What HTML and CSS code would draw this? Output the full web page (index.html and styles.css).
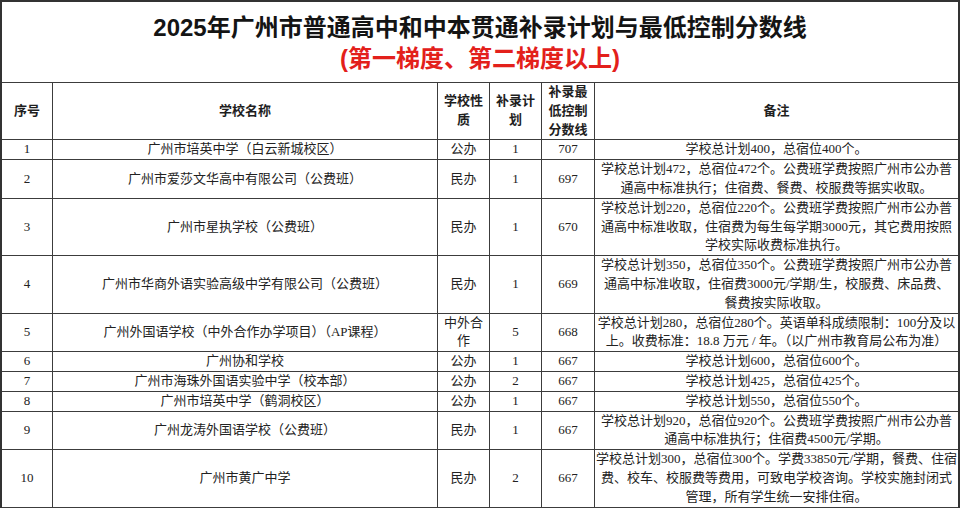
FILE: index.html
```html
<!DOCTYPE html>
<html lang="zh-CN">
<head>
<meta charset="utf-8">
<title>2025年广州市普通高中和中本贯通补录计划与最低控制分数线</title>
<link rel="stylesheet" href="styles.css">
</head>
<body>
<div class="sheet">
  <table class="grid">
    <colgroup>
      <col class="c-no">
      <col class="c-name">
      <col class="c-type">
      <col class="c-plan">
      <col class="c-score">
      <col class="c-note">
    </colgroup>
    <thead>
      <tr>
        <th colspan="6" class="title-cell">
          <div class="title">2025年广州市普通高中和中本贯通补录计划与最低控制分数线</div>
          <div class="subtitle">(第一梯度、第二梯度以上)</div>
        </th>
      </tr>
      <tr class="head">
        <th>序号</th>
        <th>学校名称</th>
        <th>学校性<br>质</th>
        <th>补录计<br>划</th>
        <th>补录最<br>低控制<br>分数线</th>
        <th class="last">备注</th>
      </tr>
    </thead>
    <tbody>
      <tr>
        <td>1</td>
        <td>广州市培英中学（白云新城校区）</td>
        <td>公办</td>
        <td>1</td>
        <td>707</td>
        <td class="note">学校总计划400，总宿位400个。</td>
      </tr>
      <tr>
        <td>2</td>
        <td>广州市爱莎文华高中有限公司（公费班）</td>
        <td>民办</td>
        <td>1</td>
        <td>697</td>
        <td class="note">学校总计划472，总宿位472个。公费班学费按照广州市公办普<br>通高中标准执行；住宿费、餐费、校服费等据实收取。</td>
      </tr>
      <tr>
        <td>3</td>
        <td>广州市星执学校（公费班）</td>
        <td>民办</td>
        <td>1</td>
        <td>670</td>
        <td class="note">学校总计划220，总宿位220个。公费班学费按照广州市公办普<br>通高中标准收取，住宿费为每生每学期3000元，其它费用按照<br>学校实际收费标准执行。</td>
      </tr>
      <tr>
        <td>4</td>
        <td>广州市华商外语实验高级中学有限公司（公费班）</td>
        <td>民办</td>
        <td>1</td>
        <td>669</td>
        <td class="note">学校总计划350，总宿位350个。公费班学费按照广州市公办普<br>通高中标准收取，住宿费3000元/学期/生，校服费、床品费、<br>餐费按实际收取。</td>
      </tr>
      <tr>
        <td>5</td>
        <td>广州外国语学校（中外合作办学项目）（AP课程）</td>
        <td>中外合<br>作</td>
        <td>5</td>
        <td>668</td>
        <td class="note">学校总计划280，总宿位280个。英语单科成绩限制：100分及以<br>上。收费标准：18.8 万元 / 年。（以广州市教育局公布为准）</td>
      </tr>
      <tr>
        <td>6</td>
        <td>广州协和学校</td>
        <td>公办</td>
        <td>1</td>
        <td>667</td>
        <td class="note">学校总计划600，总宿位600个。</td>
      </tr>
      <tr>
        <td>7</td>
        <td>广州市海珠外国语实验中学（校本部）</td>
        <td>公办</td>
        <td>2</td>
        <td>667</td>
        <td class="note">学校总计划425，总宿位425个。</td>
      </tr>
      <tr>
        <td>8</td>
        <td>广州市培英中学（鹤洞校区）</td>
        <td>公办</td>
        <td>1</td>
        <td>667</td>
        <td class="note">学校总计划550，总宿位550个。</td>
      </tr>
      <tr>
        <td>9</td>
        <td>广州龙涛外国语学校（公费班）</td>
        <td>民办</td>
        <td>1</td>
        <td>667</td>
        <td class="note">学校总计划920，总宿位920个。公费班学费按照广州市公办普<br>通高中标准执行；住宿费4500元/学期。</td>
      </tr>
      <tr>
        <td>10</td>
        <td>广州市黄广中学</td>
        <td>民办</td>
        <td>2</td>
        <td>667</td>
        <td class="note">学校总计划300，总宿位300个。学费33850元/学期，餐费、住宿<br>费、校车、校服费等费用，可致电学校咨询。学校实施封闭式<br>管理，所有学生统一安排住宿。</td>
      </tr>
    </tbody>
  </table>
</div>
</body>
</html>
```

FILE: styles.css
```css
html, body {
  margin: 0;
  padding: 0;
  background: #ffffff;
}

.sheet {
  width: 960px;
  box-sizing: border-box;
  border: 2px solid #333333;
  border-bottom: none;
  background: #ffffff;
}

.grid {
  width: 956px;
  table-layout: fixed;
  border-collapse: separate;
  border-spacing: 0;
  font-family: "Liberation Serif", "Noto Sans CJK SC", serif;
  font-size: 13px;
  color: #222222;
}

.c-no { width: 51px; }
.c-name { width: 385px; }
.c-type { width: 52px; }
.c-plan { width: 52px; }
.c-score { width: 53px; }
.c-note { width: 363px; }

.grid th,
.grid td {
  border-right: 1px solid #3c3c3c;
  border-bottom: 1px solid #3c3c3c;
  padding: 0;
  text-align: center;
  vertical-align: middle;
  line-height: 18.8px;
  box-sizing: border-box;
}

.grid th:last-child,
.grid td:last-child {
  border-right: none;
}

.title-cell {
  padding: 10px 0 8px !important;
  font-family: "Liberation Sans", "Noto Sans CJK SC", sans-serif;
  font-weight: 700;
}

.title {
  font-size: 24px;
  line-height: 31px !important;
  color: #141414;
}

.subtitle {
  font-size: 24px;
  line-height: 31px;
  color: #e3201b;
}

.head th {
  font-family: "Liberation Sans", "Noto Sans CJK SC", sans-serif;
  font-size: 13px;
  font-weight: 700;
  color: #1e1e1e;
}

.note {
  white-space: nowrap;
  overflow: hidden;
}
```
